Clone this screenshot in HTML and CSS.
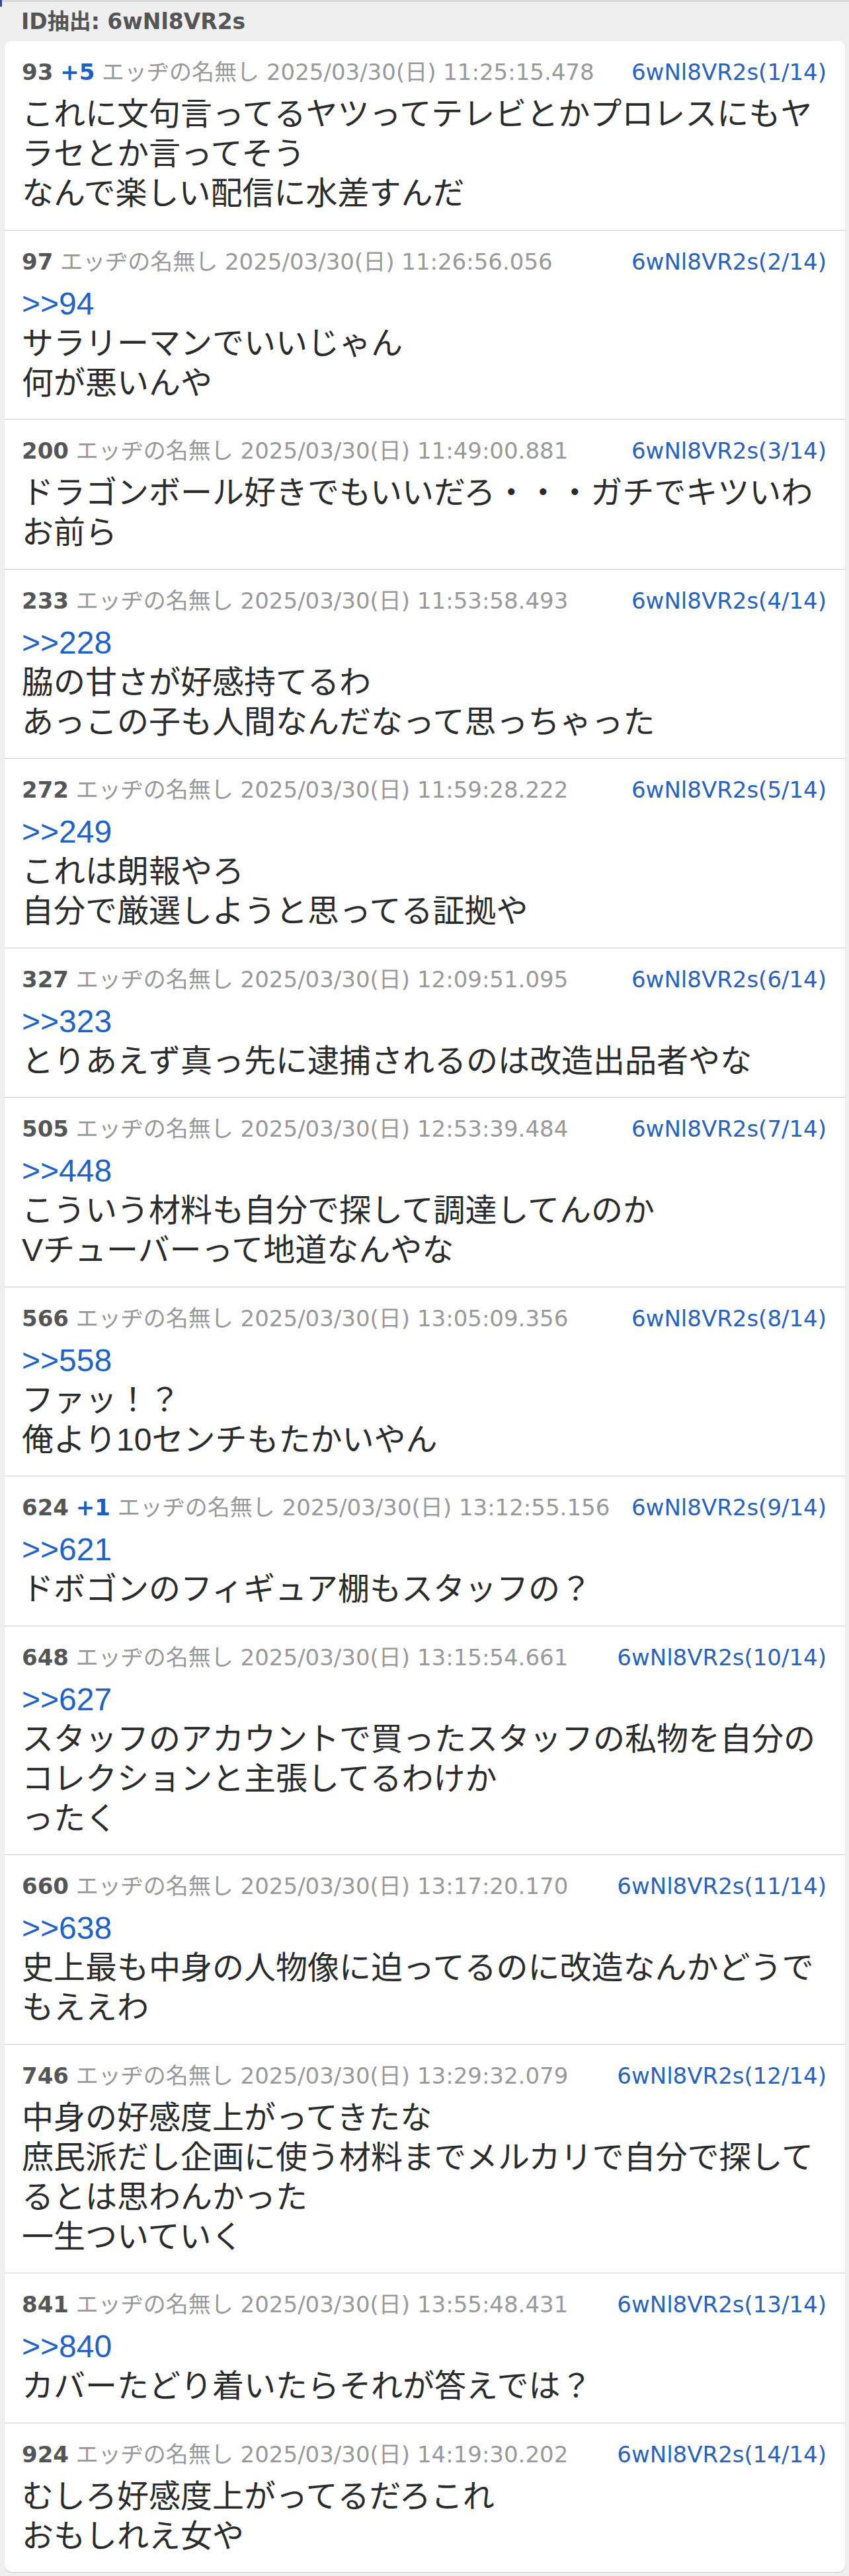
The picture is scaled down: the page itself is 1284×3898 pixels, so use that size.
FILE: index.html
```html
<!DOCTYPE html>
<html lang="ja">
<head>
<meta charset="utf-8">
<title>ID抽出: 6wNl8VR2s</title>
<link rel="stylesheet" href="styles.css">
</head>
<body>
<div class="page">
  <div class="head">ID抽出: 6wNl8VR2s</div>
  <div class="thread">
    <div class="post">
      <div class="meta"><span class="meta-l"><span class="num">93</span> <span class="plus">+5</span> <span class="name">エッヂの名無し</span> <span class="date">2025/03/30(日) 11:25:15.478</span></span><span class="uid">6wNl8VR2s(1/14)</span></div>
      <div class="msg">これに文句言ってるヤツってテレビとかプロレスにもヤラセとか言ってそう<br>なんで楽しい配信に水差すんだ</div>
    </div>
    <div class="post">
      <div class="meta"><span class="meta-l"><span class="num">97</span> <span class="name">エッヂの名無し</span> <span class="date">2025/03/30(日) 11:26:56.056</span></span><span class="uid">6wNl8VR2s(2/14)</span></div>
      <div class="msg"><a class="anc" href="#">&gt;&gt;94</a>サラリーマンでいいじゃん<br>何が悪いんや</div>
    </div>
    <div class="post">
      <div class="meta"><span class="meta-l"><span class="num">200</span> <span class="name">エッヂの名無し</span> <span class="date">2025/03/30(日) 11:49:00.881</span></span><span class="uid">6wNl8VR2s(3/14)</span></div>
      <div class="msg">ドラゴンボール好きでもいいだろ・・・ガチでキツいわお前ら</div>
    </div>
    <div class="post">
      <div class="meta"><span class="meta-l"><span class="num">233</span> <span class="name">エッヂの名無し</span> <span class="date">2025/03/30(日) 11:53:58.493</span></span><span class="uid">6wNl8VR2s(4/14)</span></div>
      <div class="msg"><a class="anc" href="#">&gt;&gt;228</a>脇の甘さが好感持てるわ<br>あっこの子も人間なんだなって思っちゃった</div>
    </div>
    <div class="post">
      <div class="meta"><span class="meta-l"><span class="num">272</span> <span class="name">エッヂの名無し</span> <span class="date">2025/03/30(日) 11:59:28.222</span></span><span class="uid">6wNl8VR2s(5/14)</span></div>
      <div class="msg"><a class="anc" href="#">&gt;&gt;249</a>これは朗報やろ<br>自分で厳選しようと思ってる証拠や</div>
    </div>
    <div class="post">
      <div class="meta"><span class="meta-l"><span class="num">327</span> <span class="name">エッヂの名無し</span> <span class="date">2025/03/30(日) 12:09:51.095</span></span><span class="uid">6wNl8VR2s(6/14)</span></div>
      <div class="msg"><a class="anc" href="#">&gt;&gt;323</a>とりあえず真っ先に逮捕されるのは改造出品者やな</div>
    </div>
    <div class="post">
      <div class="meta"><span class="meta-l"><span class="num">505</span> <span class="name">エッヂの名無し</span> <span class="date">2025/03/30(日) 12:53:39.484</span></span><span class="uid">6wNl8VR2s(7/14)</span></div>
      <div class="msg"><a class="anc" href="#">&gt;&gt;448</a>こういう材料も自分で探して調達してんのか<br>Vチューバーって地道なんやな</div>
    </div>
    <div class="post">
      <div class="meta"><span class="meta-l"><span class="num">566</span> <span class="name">エッヂの名無し</span> <span class="date">2025/03/30(日) 13:05:09.356</span></span><span class="uid">6wNl8VR2s(8/14)</span></div>
      <div class="msg"><a class="anc" href="#">&gt;&gt;558</a>ファッ！？<br>俺より10センチもたかいやん</div>
    </div>
    <div class="post">
      <div class="meta"><span class="meta-l"><span class="num">624</span> <span class="plus">+1</span> <span class="name">エッヂの名無し</span> <span class="date">2025/03/30(日) 13:12:55.156</span></span><span class="uid">6wNl8VR2s(9/14)</span></div>
      <div class="msg"><a class="anc" href="#">&gt;&gt;621</a>ドボゴンのフィギュア棚もスタッフの？</div>
    </div>
    <div class="post">
      <div class="meta"><span class="meta-l"><span class="num">648</span> <span class="name">エッヂの名無し</span> <span class="date">2025/03/30(日) 13:15:54.661</span></span><span class="uid">6wNl8VR2s(10/14)</span></div>
      <div class="msg"><a class="anc" href="#">&gt;&gt;627</a>スタッフのアカウントで買ったスタッフの私物を自分のコレクションと主張してるわけか<br>ったく</div>
    </div>
    <div class="post">
      <div class="meta"><span class="meta-l"><span class="num">660</span> <span class="name">エッヂの名無し</span> <span class="date">2025/03/30(日) 13:17:20.170</span></span><span class="uid">6wNl8VR2s(11/14)</span></div>
      <div class="msg"><a class="anc" href="#">&gt;&gt;638</a>史上最も中身の人物像に迫ってるのに改造なんかどうでもええわ</div>
    </div>
    <div class="post">
      <div class="meta"><span class="meta-l"><span class="num">746</span> <span class="name">エッヂの名無し</span> <span class="date">2025/03/30(日) 13:29:32.079</span></span><span class="uid">6wNl8VR2s(12/14)</span></div>
      <div class="msg">中身の好感度上がってきたな<br>庶民派だし企画に使う材料までメルカリで自分で探してるとは思わんかった<br>一生ついていく</div>
    </div>
    <div class="post">
      <div class="meta"><span class="meta-l"><span class="num">841</span> <span class="name">エッヂの名無し</span> <span class="date">2025/03/30(日) 13:55:48.431</span></span><span class="uid">6wNl8VR2s(13/14)</span></div>
      <div class="msg"><a class="anc" href="#">&gt;&gt;840</a>カバーたどり着いたらそれが答えでは？</div>
    </div>
    <div class="post">
      <div class="meta"><span class="meta-l"><span class="num">924</span> <span class="name">エッヂの名無し</span> <span class="date">2025/03/30(日) 14:19:30.202</span></span><span class="uid">6wNl8VR2s(14/14)</span></div>
      <div class="msg">むしろ好感度上がってるだろこれ<br>おもしれえ女や</div>
    </div>
  </div>
</div>
</body>
</html>
```

FILE: styles.css
```css
html, body {
  margin: 0;
  padding: 0;
}

body {
  background: #efefef;
  font-family: "DejaVu Sans", "Noto Sans CJK JP", sans-serif;
}

.page {
  position: relative;
  border-top: 3px solid #d9d9d9;
  padding-bottom: 6px;
}

.page::before {
  content: "";
  position: absolute;
  left: 0;
  top: -3px;
  width: 3px;
  height: 10px;
  background: #2b4f8e;
}

.head {
  height: 59px;
  box-sizing: border-box;
  padding: 1px 32px 0;
  line-height: 58px;
  font-size: 33px;
  font-weight: bold;
  color: #555;
}

.thread {
  margin: 0 6px 0 7px;
  background: #fff;
  border-radius: 10px;
  box-shadow: 0 1px 1px rgba(0, 0, 0, 0.18);
}

.post {
  padding: 27px 28px 24.5px 26px;
  border-top: 1px solid #cbcbcb;
}

.post:first-child {
  border-top: 0;
}

.meta {
  display: flex;
  justify-content: space-between;
  align-items: baseline;
  font-size: 34px;
  line-height: 40px;
  margin-bottom: 14px;
  white-space: nowrap;
}

.num {
  color: #555;
  font-weight: bold;
}

.plus {
  color: #1f5fc0;
  font-weight: bold;
}

.name,
.date {
  color: #999;
}

.uid {
  color: #2a63b5;
}

.msg {
  font-family: "Liberation Sans", "Noto Sans CJK JP", sans-serif;
  font-size: 48px;
  line-height: 60px;
  color: #2b2b2b;
}

.anc {
  display: block;
  color: #2262c0;
  text-decoration: none;
}
```
